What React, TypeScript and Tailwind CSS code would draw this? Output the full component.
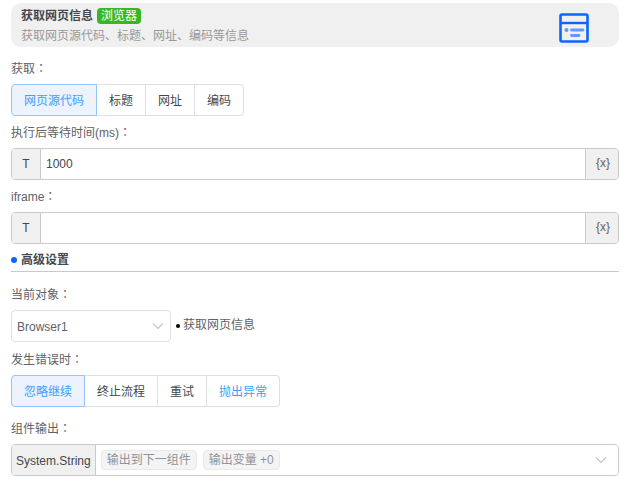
import { useState } from "react";
import type { ReactNode } from "react";

function Colon() {
  return <span className="font-['Noto_Sans_CJK_JP',sans-serif]">：</span>;
}

function Caption({ children }: { children: ReactNode }) {
  return (
    <>
      {children}
      <Colon />
    </>
  );
}

function Chevron() {
  return (
    <svg className="pointer-events-none h-3 w-3 shrink-0" viewBox="0 0 12 12" fill="none" stroke="#c0c4cc" aria-hidden="true">
      <path d="M1 3.5 6 8.5 11 3.5" strokeWidth="1.1" />
    </svg>
  );
}

function PageIcon() {
  return (
    <svg className="h-8 w-8" viewBox="0 0 32 32" fill="none" aria-hidden="true">
      <rect x="2.5" y="2.5" width="27" height="27" rx="1.5" stroke="#0a66ff" strokeWidth="2.6" />
      <path d="M2.5 11H29.5" stroke="#0a66ff" strokeWidth="2.4" />
      <path d="M13.5 18H25M13.5 23.5H21" stroke="#5c9aff" strokeWidth="2.8" strokeLinecap="round" />
      <circle cx="8.5" cy="18" r="2" fill="#5c9aff" />
    </svg>
  );
}

type Option = { label: string; accent?: boolean };

function RadioGroup({ name, title, options }: { name: string; title: string; options: Option[] }) {
  const [value, setValue] = useState(options[0].label);
  return (
    <fieldset className="min-w-0">
      <legend className="h-8 leading-8">
        <Caption>{title}</Caption>
      </legend>
      <div className="flex h-8">
        {options.map((o) => (
          <label
            key={o.label}
            className={
              "flex cursor-pointer items-center border-y border-r px-3 pt-[2px] first:rounded-l first:border-l last:rounded-r has-checked:border-[#94c4fb] has-checked:bg-[#ecf3ff] has-checked:text-[#409eff] " +
              (o.accent ? "border-[#dcdfe6] text-[#409eff]" : "border-[#dcdfe6] text-[#44474d]")
            }
          >
            <input
              type="radio"
              name={name}
              className="sr-only"
              checked={value === o.label}
              onChange={() => setValue(o.label)}
            />
            {o.label}
          </label>
        ))}
      </div>
    </fieldset>
  );
}

function TextField({ id, title, initial }: { id: string; title: string; initial: string }) {
  const [value, setValue] = useState(initial);
  return (
    <div>
      <label htmlFor={id} className="block h-8 leading-8">
        <Caption>{title}</Caption>
      </label>
      <div className="flex h-8 overflow-hidden rounded border border-[#c8c9cc]">
        <button type="button" className="w-[29px] shrink-0 border-r border-[#c8c9cc] bg-[#f0f0f0] text-[#44474d]">
          T
        </button>
        <input
          id={id}
          value={value}
          onChange={(e) => setValue(e.target.value)}
          className="min-w-0 flex-1 bg-white px-[5px] text-[#44474d] outline-none"
        />
        <button type="button" className="w-[33px] shrink-0 border-l border-[#c8c9cc] bg-[#f0f0f0] pb-[2px] pl-[2px]">
          {"{x}"}
        </button>
      </div>
    </div>
  );
}

export default function App() {
  return (
    <main className="bg-white px-3 pt-[3px] pb-3 pl-[11px] font-['Liberation_Sans','Noto_Sans_CJK_SC',sans-serif] text-[12px] text-[#606266]">
      <header className="flex h-11 items-center justify-between rounded-[10px] bg-[#f0f0f0] pr-[29px] pl-[10px]">
        <div className="pt-[2px]">
          <h1 className="flex h-5 items-center gap-1 font-bold text-[#44474d]">
            获取网页信息
            <span className="h-4 rounded bg-[#35b821] px-1 leading-4 font-normal text-white">浏览器</span>
          </h1>
          <p className="h-5 leading-5 text-[#999999]">获取网页源代码、标题、网址、编码等信息</p>
        </div>
        <div className="pt-[6px]">
          <PageIcon />
        </div>
      </header>

      <div className="pt-[5px]">
        <RadioGroup
          name="source"
          title="获取"
          options={[{ label: "网页源代码" }, { label: "标题" }, { label: "网址" }, { label: "编码" }]}
        />
        <TextField id="wait" title="执行后等待时间(ms)" initial="1000" />
        <TextField id="iframe" title="iframe" initial="" />
      </div>

      <h2 className="flex h-7 items-center gap-1 border-b border-[#c8c9cc] pt-1 font-bold text-[#44474d]">
        <span className="h-[6px] w-[6px] rounded-full bg-[#0a66ff]" />
        高级设置
      </h2>

      <div className="pt-[6px]">
        <label htmlFor="target" className="block h-8 leading-8">
          <Caption>当前对象</Caption>
        </label>
        <div className="flex items-center">
          <div className="grid h-8 w-40 items-center">
            <select
              id="target"
              className="col-start-1 row-start-1 h-8 w-full appearance-none rounded border border-[#dcdfe6] bg-white px-[5px] pt-[2px]"
            >
              <option>Browser1</option>
            </select>
            <span className="pointer-events-none col-start-1 row-start-1 justify-self-end pr-[7px]">
              <Chevron />
            </span>
          </div>
          <span className="ml-[5px] flex items-center gap-[3px]">
            <span className="h-1 w-1 rounded-full bg-black" />
            <span className="pb-[2px]">获取网页信息</span>
          </span>
        </div>
      </div>

      <div className="pt-px">
        <RadioGroup
          name="on-error"
          title="发生错误时"
          options={[
            { label: "忽略继续" },
            { label: "终止流程" },
            { label: "重试" },
            { label: "抛出异常", accent: true },
          ]}
        />
      </div>

      <div className="pt-[5px]">
        <span id="output-label" className="block h-8 leading-8">
          <Caption>组件输出</Caption>
        </span>
        <div className="flex h-8 overflow-hidden rounded border border-[#c8c9cc]">
          <span className="flex shrink-0 items-center border-r border-[#c8c9cc] bg-[#f0f0f0] px-1 pt-[2px] text-[#44474d]">
            System.String
          </span>
          <button
            type="button"
            aria-haspopup="listbox"
            aria-labelledby="output-label"
            className="flex min-w-0 flex-1 items-center gap-[6px] bg-white pr-[11px] pl-[5px] text-[#909399]"
          >
            <span className="flex h-5 items-center rounded border border-[#e9e9eb] bg-[#f4f4f5] px-[5px]">
              输出到下一组件
            </span>
            <span className="flex h-5 items-center rounded border border-[#e9e9eb] bg-[#f4f4f5] px-[5px]">
              输出变量 +0
            </span>
            <span className="ml-auto">
              <Chevron />
            </span>
          </button>
        </div>
      </div>
    </main>
  );
}
